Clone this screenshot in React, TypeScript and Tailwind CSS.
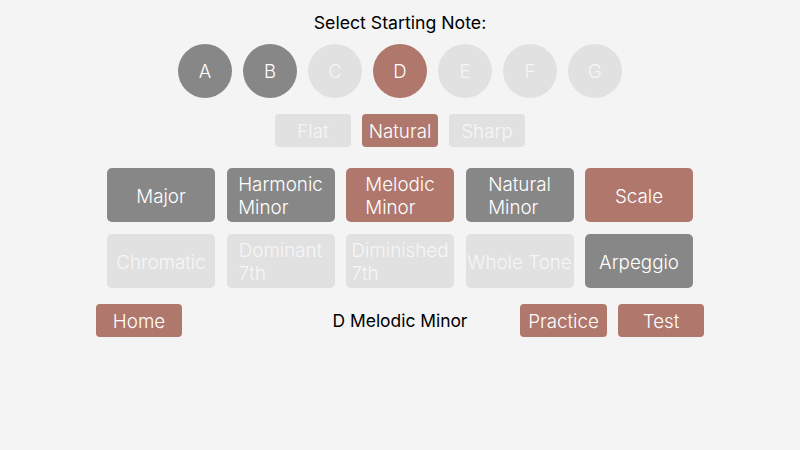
import React from "react";

const GRAY = "bg-[#878787] text-white";
const ROSE = "bg-[#b0776c] text-white";
const LIGHT = "bg-[#e1e1e1] text-[#f6f6f6]";

const notes: { n: string; c: string }[] = [
  { n: "A", c: GRAY },
  { n: "B", c: GRAY },
  { n: "C", c: LIGHT },
  { n: "D", c: ROSE },
  { n: "E", c: LIGHT },
  { n: "F", c: LIGHT },
  { n: "G", c: LIGHT },
];

const accs: { n: string; c: string }[] = [
  { n: "Flat", c: LIGHT },
  { n: "Natural", c: ROSE },
  { n: "Sharp", c: LIGHT },
];

const row1: { l: string[]; c: string }[] = [
  { l: ["Major"], c: GRAY },
  { l: ["Harmonic", "Minor"], c: GRAY },
  { l: ["Melodic", "Minor"], c: ROSE },
  { l: ["Natural", "Minor"], c: GRAY },
  { l: ["Scale"], c: ROSE },
];

const row2: { l: string[]; c: string }[] = [
  { l: ["Chromatic"], c: LIGHT },
  { l: ["Dominant", "7th"], c: LIGHT },
  { l: ["Diminished", "7th"], c: LIGHT },
  { l: ["Whole Tone"], c: LIGHT },
  { l: ["Arpeggio"], c: GRAY },
];

function Box({ l, c }: { l: string[]; c: string }) {
  return (
    <div
      className={`w-[108px] h-[54px] rounded-[5px] flex items-center justify-center overflow-hidden pt-[2px] ${c}`}
    >
      <div className="text-left text-[18.8px] leading-[23px] font-light whitespace-nowrap">
        {l.map((x) => (
          <div key={x}>{x}</div>
        ))}
      </div>
    </div>
  );
}

export default function App() {
  return (
    <div
      className="w-[800px] h-[450px] bg-[#f4f4f4] flex flex-col items-center pt-[12px]"
      style={{ fontFamily: "Inter, 'Liberation Sans', sans-serif" }}
    >
      <div className="text-[17.7px] leading-[21px] text-black">Select Starting Note:</div>
      <div className="mt-[11px] flex gap-[11px]">
        {notes.map((x) => (
          <div
            key={x.n}
            className={`w-[54px] h-[54px] rounded-full flex items-center justify-center pt-[2px] text-[18.5px] font-light ${x.c}`}
          >
            {x.n}
          </div>
        ))}
      </div>
      <div className="mt-[16px] flex gap-[11px]">
        {accs.map((x) => (
          <div
            key={x.n}
            className={`w-[76px] h-[33px] rounded-[4px] flex items-center justify-center pt-[3px] text-[18.8px] font-light ${x.c}`}
          >
            {x.n}
          </div>
        ))}
      </div>
      <div className="mt-[21px] flex gap-[11.5px]">
        {row1.map((x) => (
          <Box key={x.l.join()} l={x.l} c={x.c} />
        ))}
      </div>
      <div className="mt-[12px] flex gap-[11.5px]">
        {row2.map((x) => (
          <Box key={x.l.join()} l={x.l} c={x.c} />
        ))}
      </div>
      <div className="mt-[16px] w-[608px] grid grid-cols-[1fr_auto_1fr] items-center">
        <div className="flex justify-start">
          <div className={`w-[86px] h-[33px] rounded-[4px] flex items-center justify-center pt-[3px] text-[18.8px] font-light ${ROSE}`}>
            Home
          </div>
        </div>
        <div className="text-[17.4px] text-black pt-[2px]">D Melodic Minor</div>
        <div className="flex justify-end gap-[11px]">
          <div className={`w-[87px] h-[33px] rounded-[4px] flex items-center justify-center pt-[3px] text-[18.8px] font-light ${ROSE}`}>
            Practice
          </div>
          <div className={`w-[86px] h-[33px] rounded-[4px] flex items-center justify-center pt-[3px] text-[18.8px] font-light ${ROSE}`}>
            Test
          </div>
        </div>
      </div>
    </div>
  );
}
